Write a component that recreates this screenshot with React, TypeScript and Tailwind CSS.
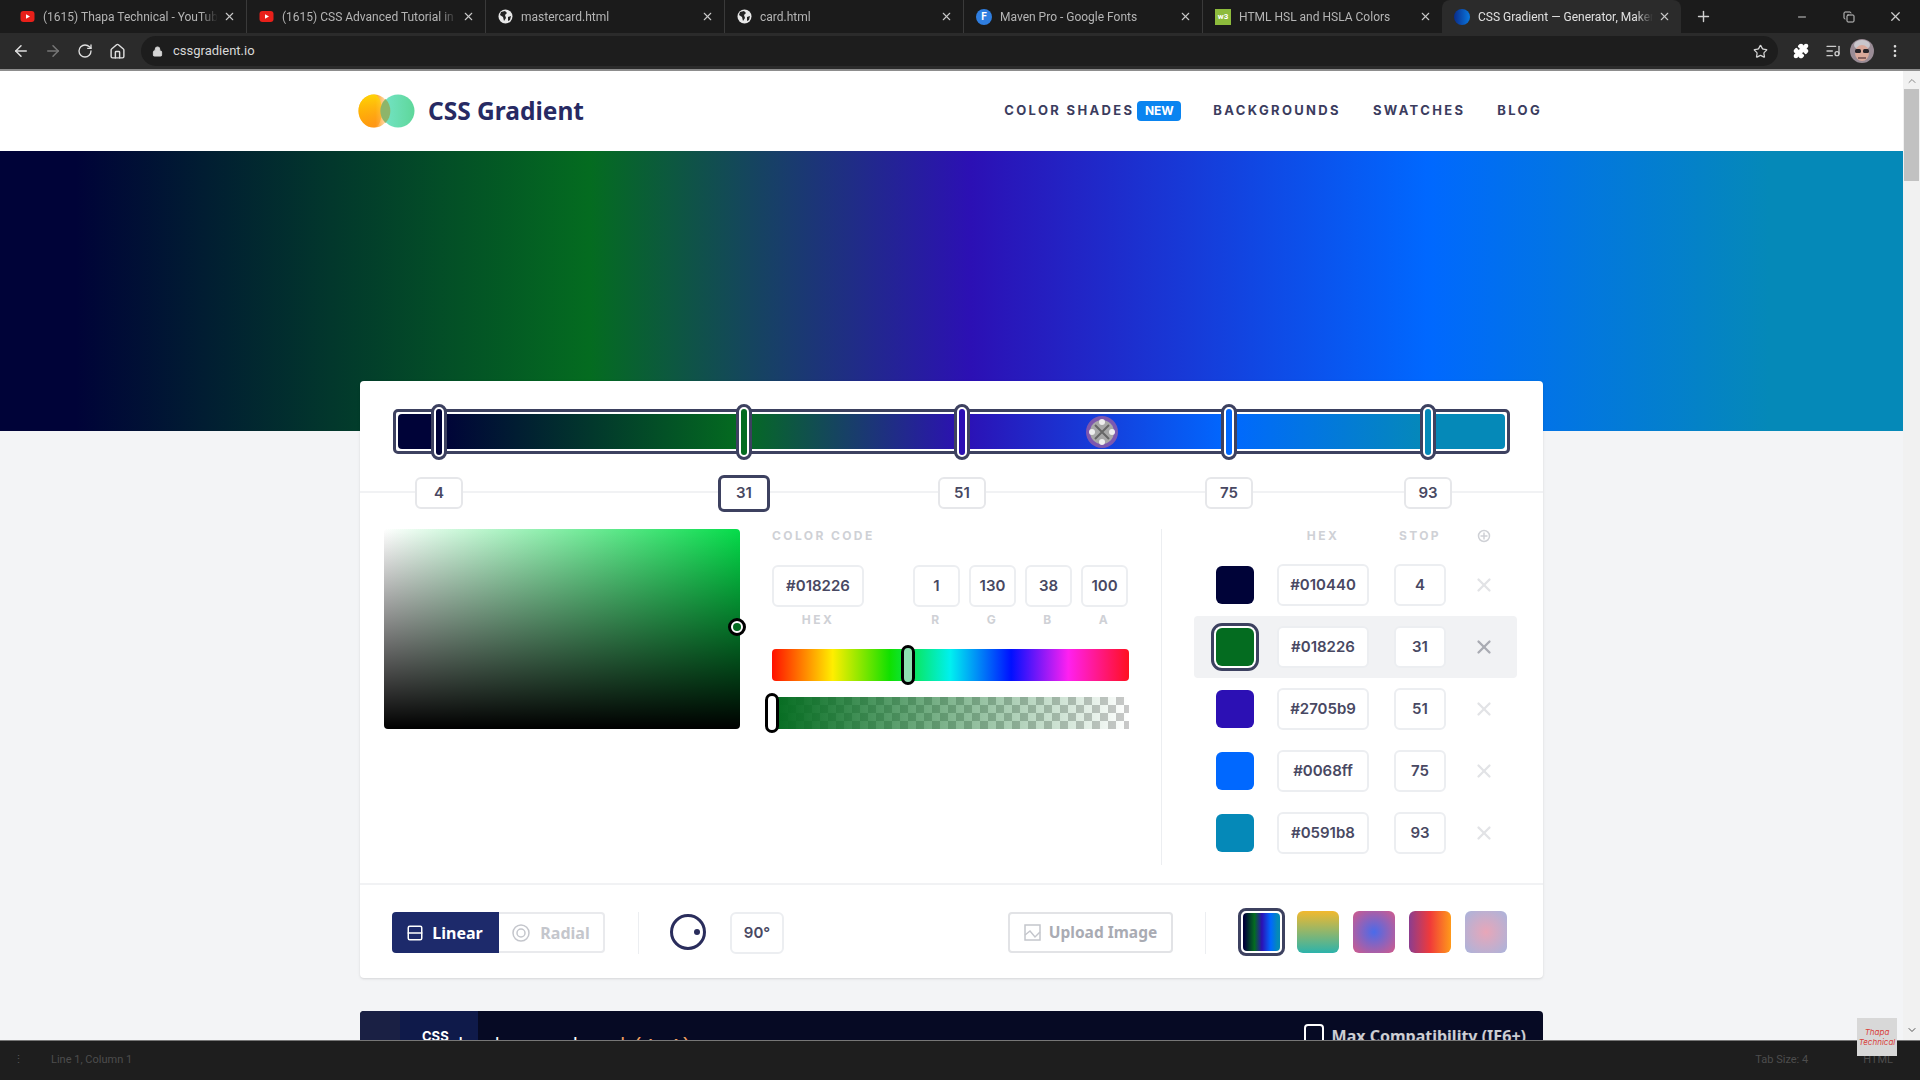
import { ArrowLeft, ArrowRight, RotateCw, Home, Lock, Star, Puzzle, ListMusic, MoreVertical, X, Plus, Minus, Copy, Columns2, ChevronUp, ChevronDown } from 'lucide-react';

type Tab = { title: string; icon: 'yt' | 'globe' | 'fonts' | 'w3' | 'grad'; active?: boolean };
type Stop = { x: number; value: number; hex: string; shown: string; active?: boolean };

const tabs: Tab[] = [
  { title: '(1615) Thapa Technical - YouTube', icon: 'yt' },
  { title: '(1615) CSS Advanced Tutorial in Hindi', icon: 'yt' },
  { title: 'mastercard.html', icon: 'globe' },
  { title: 'card.html', icon: 'globe' },
  { title: 'Maven Pro - Google Fonts', icon: 'fonts' },
  { title: 'HTML HSL and HSLA Colors', icon: 'w3' },
  { title: 'CSS Gradient — Generator, Maker', icon: 'grad', active: true },
];

// x = centre of the handle, measured from the left edge of the bar
// shown = colour as it looks in the picture (a bit off from the hex label)
const stops: Stop[] = [
  { x: 46, value: 4, hex: '#010440', shown: '#000338' },
  { x: 351, value: 31, hex: '#018226', shown: '#046c20', active: true },
  { x: 569, value: 51, hex: '#2705b9', shown: '#2c10b4' },
  { x: 836, value: 75, hex: '#0068ff', shown: '#0068ff' },
  { x: 1035, value: 93, hex: '#0591b8', shown: '#0589b8' },
];

const presets = [
  'bg-[linear-gradient(180deg,#f2b92e,#2cb3ab)]',
  'bg-[radial-gradient(circle,#4a6bea,#d45a8a)]',
  'bg-[linear-gradient(90deg,#8b3d8f,#f03a3a,#ff9a1a)]',
  'bg-[radial-gradient(circle,#e8a6b8,#a9b4dc)]',
];

const inputCls =
  'flex items-center justify-center bg-white border-2 border-[#eceef1] rounded-md text-[15px] font-semibold text-[#484862]';
const labelCls = 'text-[12px] font-bold tracking-[0.2em] text-[#cfd1d6] leading-[14px]';

function TabIcon({ icon }: { icon: Tab['icon'] }) {
  if (icon === 'yt')
    return (
      <svg width="15" height="15" viewBox="0 0 15 15" className="shrink-0">
        <rect x="0.5" y="2" width="14" height="11" rx="3" fill="#e8201a" />
        <path d="M6 5.3 L10 7.5 L6 9.7 Z" fill="#fff" />
      </svg>
    );
  if (icon === 'globe')
    return (
      <svg width="15" height="15" viewBox="0 0 15 15" className="shrink-0">
        <circle cx="7.5" cy="7.5" r="7" fill="#e8e8e8" />
        <path d="M3 3 L7 2 L9 4 L7 6 L8 9 L6 12 L5 8 L2 6 Z M10 8 L13 7 L12 11 L10 12 Z" fill="#222" />
      </svg>
    );
  if (icon === 'fonts')
    return (
      <div className="w-[16px] h-[16px] rounded-full bg-[#2f7ee0] text-white text-[10px] font-bold flex items-center justify-center shrink-0">
        F
      </div>
    );
  if (icon === 'w3')
    return (
      <div className="w-[16px] h-[16px] bg-[#8dbb3c] text-white text-[8px] font-bold flex items-center justify-center shrink-0">
        w3
      </div>
    );
  return <div className="w-[16px] h-[16px] rounded-full bg-[linear-gradient(90deg,#0a2c8a,#0a78e0)] shrink-0" />;
}

function TabBar() {
  return (
    <div className="h-[33px] bg-[#1b1b1b] flex items-end pl-[8px] shrink-0">
      {tabs.map((t, i) => (
        <div
          key={i}
          className={`w-[239px] h-[33px] flex items-center pl-[12px] pr-[10px] ${
            t.active ? 'bg-[#2b2b2b] rounded-t-lg' : i < 5 ? 'border-r border-[#3a3a3a]' : ''
          }`}
        >
          <TabIcon icon={t.icon} />
          <span
            className={`ml-[8px] flex-1 text-[12px] whitespace-nowrap overflow-hidden [mask-image:linear-gradient(90deg,#000_90%,transparent)] ${
              t.active ? 'text-[#e0e0e0]' : 'text-[#b5b5b5]'
            }`}
          >
            {t.title}
          </span>
          <X size={13} className="ml-[5px] text-[#c8c8c8] shrink-0" />
        </div>
      ))}
      <div className="h-[33px] w-[40px] flex items-center justify-center ml-[2px]">
        <Plus size={17} className="text-[#d0d0d0]" />
      </div>
      <div className="flex-1 h-[33px] flex items-center justify-end">
        <Minus size={12} className="text-[#ccc]" />
        <Copy size={12} className="ml-[35px] text-[#ccc]" />
        <X size={15} className="ml-[33px] mr-[17px] text-[#ccc]" />
      </div>
    </div>
  );
}

function Avatar() {
  return (
    <svg width="24" height="24" viewBox="0 0 24 24" className="ml-[9px]">
      <circle cx="12" cy="12" r="12" fill="#9a8c96" />
      <ellipse cx="12" cy="6" rx="8" ry="5" fill="#c9c6cc" />
      <ellipse cx="12" cy="14" rx="7" ry="8" fill="#d9a89a" />
      <rect x="5" y="10" width="6" height="4" rx="1.5" fill="#262228" />
      <rect x="13" y="10" width="6" height="4" rx="1.5" fill="#262228" />
      <path d="M8 19 H16" stroke="#6a4a4a" strokeWidth="1.5" />
    </svg>
  );
}

function AddressBar() {
  return (
    <div className="h-[38px] bg-[#2b2b2b] border-b-2 border-[#8d8d8d] flex items-center shrink-0">
      <ArrowLeft size={18} className="ml-[12px] text-[#e0e0e0]" />
      <ArrowRight size={18} className="ml-[14px] text-[#777]" />
      <RotateCw size={16} className="ml-[15px] text-[#e0e0e0]" />
      <Home size={17} className="ml-[16px] text-[#e0e0e0]" />
      <div className="ml-[15px] w-[1637px] h-[30px] rounded-full bg-[#1d1d1d] flex items-center pl-[11px] pr-[10px]">
        <Lock size={11} className="text-[#d5d5d5]" fill="#d5d5d5" />
        <span className="ml-[10px] text-[13px] text-[#d8d8d8] flex-1">cssgradient.io</span>
        <Star size={15} className="text-[#d5d5d5]" />
      </div>
      <Puzzle size={16} className="ml-[15px] text-white" fill="#fff" />
      <ListMusic size={16} className="ml-[16px] text-[#ccc]" />
      <Avatar />
      <MoreVertical size={16} className="ml-[13px] text-[#ddd]" />
    </div>
  );
}

function Logo() {
  return (
    <svg width="57" height="34" viewBox="0 0 57 34">
      <defs>
        <linearGradient id="lg-left" x1="0" y1="0" x2="1" y2="0">
          <stop offset="0" stopColor="#ffb000" />
          <stop offset="0.55" stopColor="#ffa020" />
          <stop offset="0.8" stopColor="#ffcf90" />
          <stop offset="1" stopColor="#ffcf90" />
        </linearGradient>
        <linearGradient id="lg-top" x1="0" y1="0" x2="0" y2="1">
          <stop offset="0" stopColor="#ffe000" stopOpacity="0.8" />
          <stop offset="1" stopColor="#ff8a10" stopOpacity="0.5" />
        </linearGradient>
        <linearGradient id="lg-right" x1="0" y1="0" x2="1" y2="0">
          <stop offset="0" stopColor="#75e4c8" />
          <stop offset="1" stopColor="#5ed79a" />
        </linearGradient>
      </defs>
      <ellipse cx="16" cy="17" rx="15.5" ry="16.5" fill="url(#lg-left)" />
      <path d="M16 0.5 A 15.5 16.5 0 0 0 16 33.5 A 8 16.5 0 0 0 16 0.5 Z" fill="url(#lg-top)" />
      <ellipse cx="40" cy="17" rx="16.5" ry="16.5" fill="url(#lg-right)" />
      <path d="M27.5 5 A 15.5 16.5 0 0 1 27.5 29 A 16.5 16.5 0 0 1 27.5 5 Z" fill="#8db56a" />
    </svg>
  );
}

function Header() {
  const nav = 'text-[13px] font-bold tracking-[0.18em] text-[#3b3c5e] whitespace-nowrap';
  return (
    <header className="h-[80px] bg-white flex items-center">
      <div className="ml-[358px] w-[1185px] flex items-center">
        <Logo />
        <span className="ml-[13px] text-[24.5px] font-bold text-[#272a63] font-['Noto_Sans']">CSS Gradient</span>
        <div className="ml-auto flex items-center">
          <span className={nav}>COLOR SHADES</span>
          <span className="ml-[3px] w-[44px] h-[20px] rounded bg-[#0a84f0] text-white text-[12px] font-bold flex items-center justify-center">
            NEW
          </span>
          <span className={`${nav} ml-[32px]`}>BACKGROUNDS</span>
          <span className={`${nav} ml-[32px]`}>SWATCHES</span>
          <span className={`${nav} ml-[32px] mr-[1px]`}>BLOG</span>
        </div>
      </div>
    </header>
  );
}

const gradientCls = 'bg-[linear-gradient(90deg,#000338_4%,#046c20_31%,#2c10b4_51%,#0068ff_75%,#0589b8_93%)]';

function GradientStrip() {
  return (
    <div className="relative mx-[33px] h-[110px]">
      <div className="absolute left-0 right-0 top-[28px] h-[45px] rounded-[5px] border-[3px] border-[#3d4160] bg-white p-[2px]">
        <div className={`h-full rounded-sm ${gradientCls}`} />
      </div>
      {stops.map((s) => (
        <div
          key={s.value}
          className="absolute top-[23px] w-[16px] h-[56px] -translate-x-1/2 rounded-full border-[3px] border-[#3d4160] bg-white p-[2px]"
          style={{ left: s.x }}
        >
          <div className="w-full h-full rounded-full" style={{ backgroundColor: s.shown }} />
        </div>
      ))}
      {stops.map((s) => (
        <div
          key={s.value}
          className={`absolute z-10 -translate-x-1/2 flex items-center justify-center bg-white rounded-md text-[15px] font-semibold text-[#484862] ${
            s.active
              ? 'top-[94px] w-[52px] h-[37px] border-[3px] border-[#3d4160]'
              : 'top-[96px] w-[48px] h-[32px] border-2 border-[#e6e7ea]'
          }`}
          style={{ left: s.x }}
        >
          {s.value}
        </div>
      ))}
      {/* mouse pointer of the recording */}
      <svg width="36" height="36" viewBox="0 0 36 36" className="absolute left-[691px] top-[33px]">
        <circle cx="18" cy="18" r="16" fill="#a060a0" opacity="0.75" />
        <circle cx="18" cy="18" r="12" fill="#a8a8a8" />
        <circle cx="18" cy="8" r="3" fill="#eee" />
        <circle cx="18" cy="28" r="3" fill="#eee" />
        <circle cx="8" cy="18" r="3" fill="#eee" />
        <circle cx="28" cy="18" r="3" fill="#eee" />
        <path d="M11 11 L25 25 M25 11 L11 25" stroke="#666" strokeWidth="2" />
      </svg>
    </div>
  );
}

function ColorPicker() {
  return (
    <div className="relative ml-[24px] w-[356px] h-[200px] rounded-sm bg-[linear-gradient(to_top,#000,transparent),linear-gradient(to_right,#fff,#05dc4a)]">
      <div className="absolute right-[-6px] top-[89px] w-[18px] h-[18px] rounded-full border-[3px] border-black bg-white p-[2px]">
        <div className="w-full h-full rounded-full bg-[#046c20]" />
      </div>
    </div>
  );
}

function ColorCode() {
  return (
    <div className="ml-[32px] w-[357px]">
      <div className={labelCls}>COLOR CODE</div>
      <div className="mt-[22px] flex gap-[9px]">
        <div className={`${inputCls} w-[92px] h-[42px] mr-[40px]`}>#018226</div>
        {['1', '130', '38', '100'].map((v, i) => (
          <div key={i} className={`${inputCls} w-[47px] h-[42px]`}>
            {v}
          </div>
        ))}
      </div>
      <div className="mt-[6px] flex gap-[9px]">
        <div className={`${labelCls} w-[92px] mr-[40px] text-center`}>HEX</div>
        {['R', 'G', 'B', 'A'].map((v) => (
          <div key={v} className={`${labelCls} w-[47px] text-center`}>
            {v}
          </div>
        ))}
      </div>
      <div className="relative mt-[22px] h-[32px] rounded-sm bg-[linear-gradient(90deg,#ff1000,#ffee00_17%,#10e000_33%,#00f0f0_50%,#0010ff_67%,#ff20f0_83%,#ff1020)]">
        <div className="absolute left-[129px] top-[-4px] w-[14px] h-[40px] rounded-full border-[3px] border-black bg-[#8ee0b0]" />
      </div>
      <div className="relative mt-[16px] h-[32px] bg-[linear-gradient(90deg,#046c20,transparent),repeating-conic-gradient(#c9c9c9_0_25%,#fff_0_50%)] bg-[length:100%_100%,16px_16px]">
        <div className="absolute left-[-7px] top-[-4px] w-[14px] h-[40px] rounded-full border-[3px] border-black bg-white" />
      </div>
    </div>
  );
}

function StopTable() {
  return (
    <div className="ml-[32px] w-[323px]">
      <div className="h-[14px] flex items-center pl-[83px]">
        <div className={`${labelCls} w-[92px] text-center`}>HEX</div>
        <div className={`${labelCls} w-[52px] ml-[25px] text-center`}>STOP</div>
        <svg width="14" height="14" viewBox="0 0 14 14" className="ml-[31px]">
          <circle cx="7" cy="7" r="5.5" fill="none" stroke="#cfd1d6" strokeWidth="1.5" />
          <path d="M7 3.5 V10.5 M3.5 7 H10.5" stroke="#cfd1d6" strokeWidth="1.5" />
        </svg>
      </div>
      <div className="mt-[11px]">
        {stops.map((s) => (
          <div
            key={s.value}
            className={`h-[62px] flex items-center pl-[22px] rounded ${s.active ? 'bg-[#f1f2f4]' : ''}`}
          >
            <div
              className={`w-[38px] h-[38px] rounded-md shrink-0 ${
                s.active ? 'ring-2 ring-white outline-[3px] outline-offset-[2px] outline-[#3d4160]' : ''
              }`}
              style={{ backgroundColor: s.shown }}
            />
            <div className={`${inputCls} ml-[23px] w-[92px] h-[42px]`}>{s.hex}</div>
            <div className={`${inputCls} ml-[25px] w-[52px] h-[42px]`}>{s.value}</div>
            <X size={22} strokeWidth={2.5} className={`ml-[27px] ${s.active ? 'text-[#a9abb3]' : 'text-[#e2e3e6]'}`} />
          </div>
        ))}
      </div>
    </div>
  );
}

function Toolbar() {
  return (
    <div className="h-[95px] border-t-2 border-[#f1f2f4] pt-[27px] pl-[32px] flex items-start">
      <div className="w-[107px] h-[41px] rounded-l bg-[#1d2a6b] flex items-center justify-center text-white text-[16px] font-bold font-['Noto_Sans']">
        <Columns2 size={18} className="rotate-90 mr-[8px] -ml-[2px]" />
        Linear
      </div>
      <div className="w-[106px] h-[41px] rounded-r border-2 border-l-0 border-[#e9eaed] flex items-center justify-center text-[#c4c6cc] text-[16px] font-bold font-['Noto_Sans']">
        <svg width="18" height="18" viewBox="0 0 18 18" className="mr-[10px]">
          <circle cx="9" cy="9" r="8" fill="none" stroke="#c4c6cc" strokeWidth="1.5" />
          <circle cx="9" cy="9" r="4" fill="none" stroke="#c4c6cc" strokeWidth="1.5" />
        </svg>
        Radial
      </div>
      <div className="ml-[33px] w-px h-[42px] bg-[#eceef1]" />
      <div className="relative ml-[31px] w-[36px] h-[36px] mt-[2px] rounded-full border-[3px] border-[#2a2d5c]">
        <div className="absolute right-[3px] top-[12px] w-[6px] h-[6px] rounded-full bg-[#2a2d5c]" />
      </div>
      <div className={`${inputCls} ml-[24px] w-[54px] h-[42px]`}>90°</div>
      <div className="ml-[224px] w-[165px] h-[41px] rounded border-2 border-[#e2e3e6] flex items-center justify-center text-[#a9abb3] text-[15.5px] font-bold font-['Noto_Sans']">
        <svg width="17" height="17" viewBox="0 0 17 17" className="mr-[8px]">
          <rect x="1" y="1" width="15" height="15" fill="none" stroke="#c4c6cc" strokeWidth="1.5" />
          <path d="M1 11 L6 7 L11 13 L16 8" fill="none" stroke="#c4c6cc" strokeWidth="1.5" />
        </svg>
        Upload Image
      </div>
      <div className="ml-[32px] w-px h-[42px] bg-[#eceef1]" />
      <div className="ml-[32px] mr-[-2px] w-[47px] h-[48px] -mt-[4px] rounded-lg border-[3px] border-[#3d4160] bg-white p-[2px] shrink-0">
        <div className={`w-full h-full rounded ${gradientCls}`} />
      </div>
      {presets.map((p, i) => (
        <div key={i} className={`ml-[14px] w-[42px] h-[42px] -mt-[1px] rounded-md ${p}`} />
      ))}
    </div>
  );
}

function CodePanel() {
  return (
    <div className="mt-[33px] ml-[360px] w-[1183px] h-[60px] rounded-t bg-[#060a24] flex">
      <div className="w-[40px] bg-[#1a2044] rounded-tl" />
      <div className="w-[78px] bg-[#0f1a4a] pt-[17px] pl-[22px] text-white text-[13px] font-bold leading-4">CSS</div>
      <div className="ml-[-20px] pt-[24px] text-[20px] font-['Liberation_Mono'] leading-6 whitespace-nowrap">
        <span className="text-white">background</span>
        <span className="ml-[18px] text-[#f0a060]">rgb(1,4)</span>
      </div>
      <div className="ml-auto flex items-start pt-[13px] pr-[17px]">
        <div className="w-[20px] h-[22px] rounded border-2 border-white mr-[8px]" />
        <span className="text-white/80 text-[16px] font-bold leading-6 font-['Noto_Sans']">Max Compatibility (IE6+)</span>
      </div>
    </div>
  );
}

export default function App() {
  return (
    <div className="relative h-screen w-screen overflow-hidden flex flex-col font-['Inter',sans-serif]">
      <div className="font-['Roboto',sans-serif]">
        <TabBar />
        <AddressBar />
      </div>
      <div className="flex-1 min-h-0 flex">
        <main className="flex-1 min-w-0 bg-[#f3f4f6] overflow-hidden">
          <Header />
          <div className={`h-[280px] ${gradientCls}`} />
          <div className="-mt-[50px] ml-[360px] w-[1183px] bg-white shadow-sm rounded-sm relative">
            <div className="border-b-2 border-[#f1f2f4]">
              <GradientStrip />
            </div>
            <div className="h-[390px] flex pt-[36px]">
              <ColorPicker />
              <ColorCode />
              <div className="ml-[32px] w-px h-[336px] bg-[#eceef1]" />
              <StopTable />
            </div>
            <Toolbar />
          </div>
          <CodePanel />
        </main>
        <div className="w-[17px] bg-[#f1f1f1] flex flex-col items-center shrink-0">
          <ChevronUp size={12} className="mt-[4px] text-[#888]" />
          <div className="mt-[2px] w-[15px] h-[92px] bg-[#c1c1c1]" />
          <ChevronDown size={12} className="mt-auto mb-[4px] text-[#555]" />
        </div>
      </div>
      <footer className="h-[40px] bg-[#1e1e1e] border-t border-[#777] flex items-center text-[11px] text-[#4d4d4d] font-['Roboto',sans-serif] shrink-0">
        <span className="ml-[13px] text-[#555]">⋮</span>
        <span className="ml-[27px]">Line 1, Column 1</span>
        <span className="ml-auto">Tab Size: 4</span>
        <span className="ml-[55px] mr-[27px]">HTML</span>
      </footer>
      <div className="absolute left-[1857px] top-[1018px] w-[40px] h-[38px] bg-[#d8d8d8] flex flex-col items-center justify-center text-[8px] italic leading-[10px] text-[#d8423c]">
        <span>Thapa</span>
        <span>Technical</span>
      </div>
    </div>
  );
}
